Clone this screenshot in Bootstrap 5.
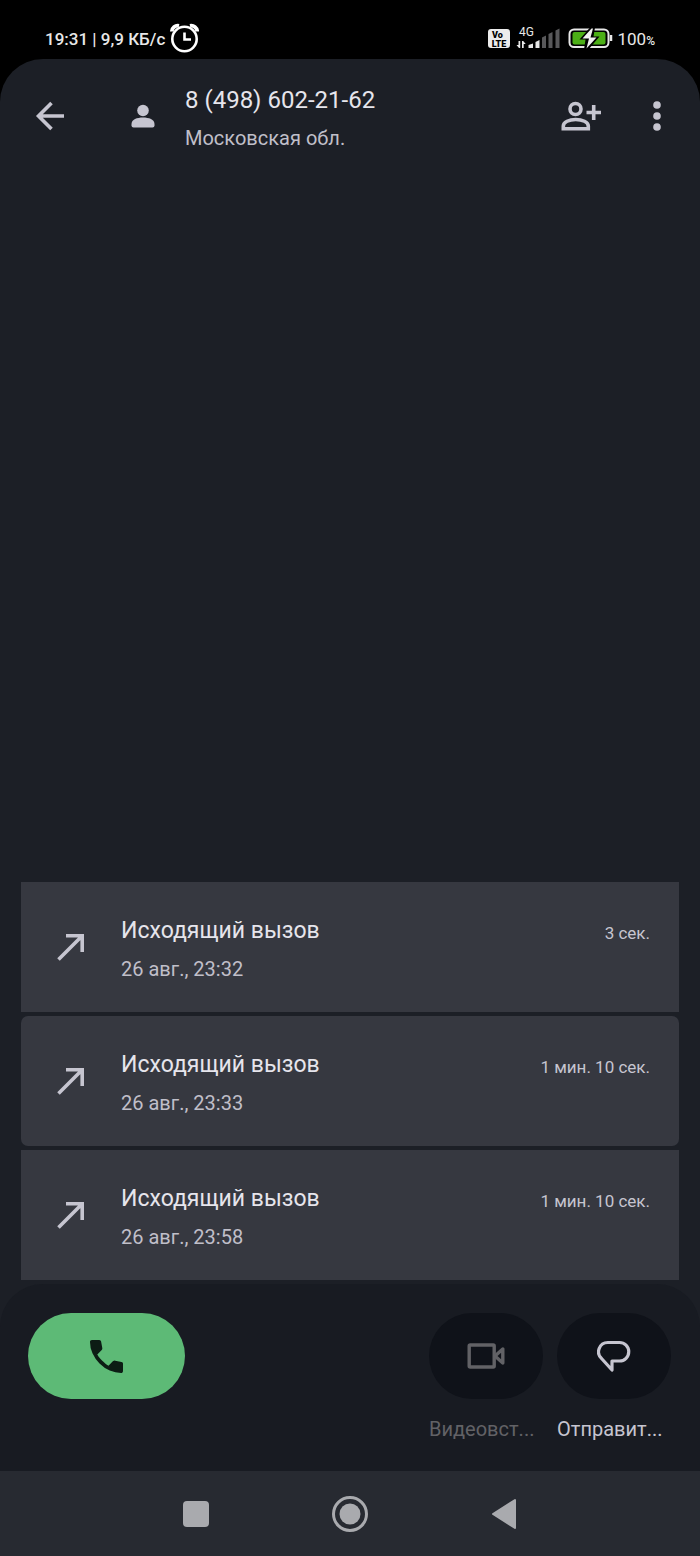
<!DOCTYPE html>
<html lang="ru" data-bs-theme="dark">
<head>
<meta charset="utf-8">
<meta name="viewport" content="width=device-width, initial-scale=1">
<title>История вызовов</title>
<link href="https://cdn.jsdelivr.net/npm/bootstrap@5.3.0/dist/css/bootstrap.min.css" rel="stylesheet">
<style>
  body { background: #000; color: #e3e2e9; font-family: Roboto, "Liberation Sans", sans-serif; }
  svg { display: block; flex: none; }
  .status-bar { height: 59px; padding: 20px 45px 0; color: #e8e8e8; font-size: 17px; line-height: 38px; }
  .status-net { font-weight: 500; }
  .pct { font-size: 12px; font-weight: 500; }
  .app-shell { background: #1c1f26; border-radius: 43px 43px 0 0; }
  .top-bar { height: 113px; }
  .icon-btn { background: none; border: 0; padding: 0; color: #c6c5d0; height: 72px; display: flex; align-items: center; justify-content: center; }
  .back-btn { width: 100px; }
  .avatar-slot { width: 85px; color: #c6c5d0; }
  .add-btn { width: 76px; }
  .more-btn { width: 75px; margin-right: 6px; }
  .line-main { font-size: 23px; line-height: 40px; font-weight: 400; margin: 0; color: #e6e5ec; }
  .line-number { font-size: 24px; }
  .line-sub { font-size: 20px; line-height: 36px; color: #c0bfc9; margin: 0; }
  .call-list { padding: 0 21px; gap: 4px; }
  .call-item { background: #363840; height: 130px; color: #c6c5d0; }
  .call-item:nth-child(2) { border-radius: 7px; }
  .call-arrow { width: 100px; }
  .call-time { font-size: 17px; line-height: 44px; padding-right: 29px; color: #c6c5d0; }
  .action-panel { background: #181b22; border-radius: 43px 43px 0 0; padding: 29px 29px 0 28px; height: 187px; }
  .pill-btn { height: 86px; width: 114px; border: 0; border-radius: 43px; background: #0f1219; color: #c6c5d0; display: flex; align-items: center; justify-content: center; padding: 0; }
  .pill-call { width: 157px; background: #5dba76; color: #0c1c14; }
  .pill-btn:disabled { color: #626266; }
  .pill-label { font-size: 20px; line-height: 32px; margin-top: 14px; color: #c6c5d0; cursor: pointer; }
  .label-off { color: #626266; }
  .actions { gap: 14px; }
  .nav-keys { background: #272a31; height: 85px; padding: 0 17%; color: #a9aaae; }
  .nav-keys .icon-btn { flex: 1 1 0; height: 100%; color: inherit; }
</style>
</head>
<body>
<div class="min-vh-100 d-flex flex-column">
  <header class="status-bar d-flex justify-content-between">
    <div class="d-flex status-net"><span>19:31 | 9,9 КБ/с</span>
      <svg class="ms-1" width="30" height="38" viewBox="171 20 30 38" fill="none" stroke="#fff" aria-hidden="true">
        <path d="M173.800 31.500A6 6 0 0 1 181 25.800M199.200 31.500A6 6 0 0 0 192 25.800" stroke-width="3.800"/>
        <circle cx="186.500" cy="39" r="12.200" stroke-width="2.600"/>
        <path d="M186.500 32.500V39.500H193" stroke-width="2.600"/>
      </svg>
    </div>
    <div class="d-flex">
      <svg width="125" height="38" viewBox="486 20 125 38" font-family="Roboto, sans-serif" aria-label="VoLTE, 4G, зарядка">
        <rect x="486" y="29" width="22" height="19" rx="3" fill="#ececec"/>
        <text x="490" y="38" font-size="9" font-weight="900" fill="#000">Vo</text>
        <text x="497" y="47" text-anchor="middle" font-size="9" font-weight="900" fill="#000">LTE</text>
        <text x="517" y="36" font-size="12" fill="#e8e8e8">4G</text>
        <g fill="#e8e8e8">
          <path d="M516.500 41h1.700v7h-1.200l-2.500-3h2zM520 48v-7h1.200l2.500 3h-2v4z"/>
          <path d="M526.500 48v-3l4.500-1.500V48zM533.500 48v-6l4-2v8z"/>
        </g>
        <path d="M540 48V37.500l4-2V48zM546.500 48V34l4-2V48zM553.500 48V30.500l4-2V48z" fill="#58585a"/>
        <rect x="567.500" y="29.500" width="39" height="17.500" rx="4.500" fill="none" stroke="#e8e8e8" stroke-width="2"/>
        <rect x="570.500" y="32" width="33" height="12.500" rx="2" fill="#4caf16"/>
        <path d="M609 35v6" stroke="#e8e8e8" stroke-width="2.500"/>
        <path d="M588 27.500L577.500 39.500H583.500L582 49.500H586.500L597.500 36.500H591.500L593 27.500Z" fill="#000"/>
        <path d="M589.500 28.500L580.500 38.500H587L584.500 48.500L594.500 37.500H588.500L591 28.500Z" fill="#f2f2f2"/>
      </svg>
      <span class="ms-1">100<span class="pct">%</span></span>
    </div>
  </header>

  <div class="app-shell flex-grow-1 d-flex flex-column">
    <div class="top-bar d-flex align-items-center">
      <button class="icon-btn back-btn" type="button" aria-label="Назад">
        <svg width="30" height="30" viewBox="35 101 30 30" fill="none" stroke="currentColor" stroke-width="3.600"><path d="M64 116H39M51.500 103L38.500 116L51.500 129"/></svg>
      </button>
      <div class="avatar-slot d-flex justify-content-center">
        <svg width="24" height="24" viewBox="130 104 24 24" fill="currentColor"><circle cx="142" cy="110.500" r="5.800"/><path d="M130.500 124c0-4.500 5.500-6.500 11.500-6.500s11.500 2 11.500 6.500v1.500q0 2-2 2h-19q-2 0-2-2z"/></svg>
      </div>
      <div class="flex-grow-1 pt-1">
        <h1 class="line-main line-number">8 (498) 602-21-62</h1>
        <p class="line-sub">Московская обл.</p>
      </div>
      <button class="icon-btn add-btn" type="button" aria-label="Добавить контакт">
        <svg width="42" height="32" viewBox="560 100 42 32" fill="none" stroke="currentColor" stroke-width="3.600"><circle cx="575.500" cy="109" r="5.500"/><path d="M563.300 128.700V126C563.300 122 569.200 119.500 575.700 119.500S588.300 122 588.300 126V128.700Z"/><path d="M593.700 105V120M586.500 112.500H601"/></svg>
      </button>
      <button class="icon-btn more-btn" type="button" aria-label="Ещё">
        <svg width="8" height="30" viewBox="0 0 8 30" fill="currentColor"><circle cx="4" cy="4" r="3.800"/><circle cx="4" cy="15" r="3.800"/><circle cx="4" cy="26" r="3.800"/></svg>
      </button>
    </div>

    <ul class="call-list list-unstyled mt-auto mb-1 d-flex flex-column">
      <li class="call-item d-flex align-items-center">
        <div class="call-arrow d-flex justify-content-center"><svg width="28" height="28" viewBox="0 0 28 28" fill="none" stroke="currentColor" stroke-width="3.600"><path d="M1.500 26.500L25 3M9 2.800H25.200V19"/></svg></div>
        <div class="flex-grow-1 d-flex justify-content-between pt-1">
          <div><h2 class="line-main">Исходящий вызов</h2><p class="line-sub">26 авг., 23:32</p></div>
          <span class="call-time">3 сек.</span>
        </div>
      </li>
      <li class="call-item d-flex align-items-center">
        <div class="call-arrow d-flex justify-content-center"><svg width="28" height="28" viewBox="0 0 28 28" fill="none" stroke="currentColor" stroke-width="3.600"><path d="M1.500 26.500L25 3M9 2.800H25.200V19"/></svg></div>
        <div class="flex-grow-1 d-flex justify-content-between pt-1">
          <div><h2 class="line-main">Исходящий вызов</h2><p class="line-sub">26 авг., 23:33</p></div>
          <span class="call-time">1 мин. 10 сек.</span>
        </div>
      </li>
      <li class="call-item d-flex align-items-center">
        <div class="call-arrow d-flex justify-content-center"><svg width="28" height="28" viewBox="0 0 28 28" fill="none" stroke="currentColor" stroke-width="3.600"><path d="M1.500 26.500L25 3M9 2.800H25.200V19"/></svg></div>
        <div class="flex-grow-1 d-flex justify-content-between pt-1">
          <div><h2 class="line-main">Исходящий вызов</h2><p class="line-sub">26 авг., 23:58</p></div>
          <span class="call-time">1 мин. 10 сек.</span>
        </div>
      </li>
    </ul>

    <div class="action-panel d-flex justify-content-between align-items-start">
      <button class="pill-btn pill-call" type="button" aria-label="Позвонить">
        <svg width="33" height="33" viewBox="3 3 18 18" fill="currentColor"><path d="M19.950 21q-3.125 0-6.187-1.350T8.200 15.800t-3.850-5.550T3 4.050Q3 3.600 3.300 3.300T4.050 3H8.100q.35 0 .625.238t.325.562l.65 3.500q.05.400-.025.675T9.400 8.450L6.975 10.900q.5.925 1.187 1.788t1.513 1.662q.775.775 1.625 1.438T13.100 17l2.350-2.350q.225-.225.588-.337t.712-.063l3.450.7q.35.100.575.363T21 15.900v4.050q0 .450-.3.750t-.750.300z"/></svg>
      </button>
      <div class="actions d-flex">
        <div class="d-flex flex-column">
          <button class="pill-btn" id="video" type="button" disabled>
            <svg width="38" height="28" viewBox="0 0 38 28" fill="none" stroke="currentColor" stroke-width="3.400" stroke-linejoin="round"><rect x="2.200" y="3" width="25" height="22" rx="1"/><path d="M28 14L35.800 7V21Z"/></svg>
          </button>
          <label class="pill-label label-off" for="video">Видеовст...</label>
        </div>
        <div class="d-flex flex-column">
          <button class="pill-btn" id="message" type="button">
            <svg width="34" height="32" viewBox="598 1340 34 32" fill="none" stroke="currentColor" stroke-width="3.200" stroke-linejoin="round"><path d="M613 1370V1361H620.500A9 9 0 0 0 620.500 1342.500H609A9.300 9.300 0 0 0 603 1359Z"/></svg>
          </button>
          <label class="pill-label" for="message">Отправит...</label>
        </div>
      </div>
    </div>
  </div>

  <nav class="nav-keys d-flex" aria-label="Системная навигация">
    <button class="icon-btn" type="button" aria-label="Недавние"><svg width="26" height="26"><rect width="26" height="26" rx="4" fill="currentColor"/></svg></button>
    <button class="icon-btn" type="button" aria-label="Домой"><svg width="36" height="36"><circle cx="18" cy="18" r="16.500" fill="none" stroke="currentColor" stroke-width="3"/><circle cx="18" cy="18" r="10.500" fill="currentColor"/></svg></button>
    <button class="icon-btn" type="button" aria-label="Назад"><svg width="26" height="32" viewBox="0 0 26 32"><path d="M2 16L24 2V30Z" fill="currentColor" stroke="currentColor" stroke-width="2" stroke-linejoin="round"/></svg></button>
  </nav>
</div>
<script src="https://cdn.jsdelivr.net/npm/bootstrap@5.3.0/dist/js/bootstrap.bundle.min.js"></script>
</body>
</html>
